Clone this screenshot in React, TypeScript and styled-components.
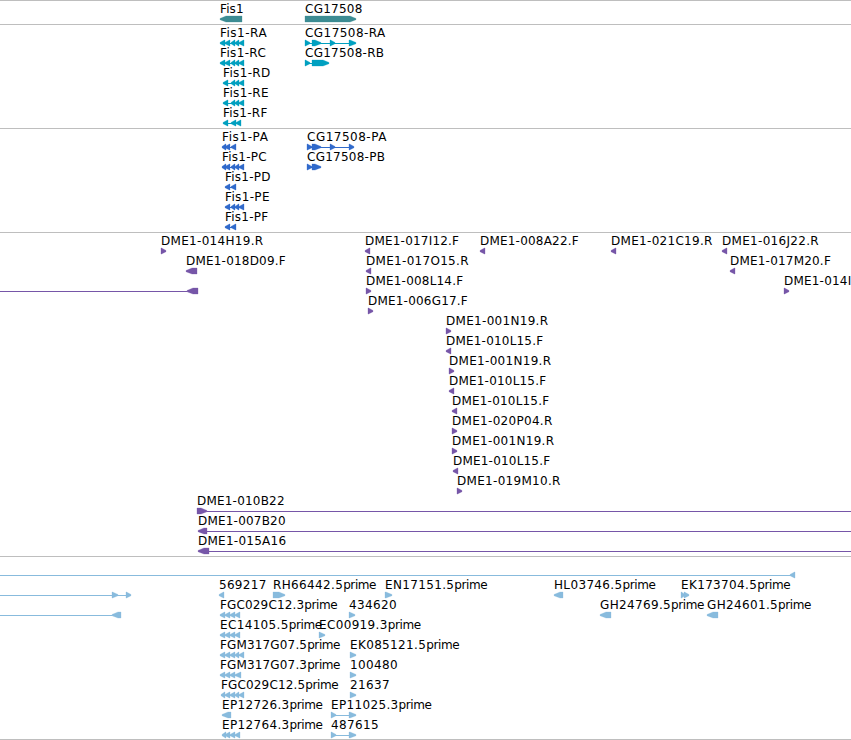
import styled, { createGlobalStyle } from "styled-components";

type Direction = "left" | "right";

type Feature = {
  name?: string;
  at: number;
  dir: Direction;
  blocks: [number, number][];
  line?: [number, number];
  tracking?: number;
};

type TrackData = {
  id: string;
  color: string;
  rows: Feature[][];
};

const GlobalStyle = createGlobalStyle`
  body {
    margin: 0;
    background: #ffffff;
  }
`;

const Browser = styled.main`
  display: flex;
  flex-direction: column;
  width: 851px;
  height: 740px;
  overflow: hidden;
  border-top: 1px solid #bebebe;
  box-sizing: border-box;
`;

const TrackContainer = styled.section`
  display: flex;
  flex-direction: column;
  padding: 2px 0 1px;
  border-bottom: 1px solid #bebebe;

  &:last-child {
    padding-bottom: 0;
  }
`;

const Row = styled.div`
  position: relative;
  height: 20px;
  flex: none;
`;

const FeatureBox = styled.div<{ $x: number }>`
  position: absolute;
  top: 0;
  left: ${({ $x }) => $x}px;
  display: flex;
  flex-direction: column;
`;

const Label = styled.span<{ $tracking: number }>`
  height: 13px;
  font-family: "DejaVu Sans", sans-serif;
  font-size: 12px;
  line-height: 13px;
  letter-spacing: ${({ $tracking }) => $tracking}px;
  white-space: pre;
  color: #000000;
`;

const Suffix = styled.span`
  letter-spacing: -0.4px;
`;

const Glyph = styled.svg`
  display: block;
  height: 6px;
  overflow: visible;
`;

const right = (from: number, ...blocks: [number, number][]) => ({ at: from, dir: "right" as Direction, blocks });
const left = (from: number, ...blocks: [number, number][]) => ({ at: from, dir: "left" as Direction, blocks });

const endTracking = (name: string) => (name.endsWith(".F") ? 0.2 : 0.3);
const tickLeft = (name: string, at: number): Feature => ({
  name,
  ...left(at, [at, at + 5]),
  tracking: endTracking(name),
});
const tickRight = (name: string, at: number): Feature => ({
  name,
  ...right(at, [at, at + 5]),
  tracking: endTracking(name),
});

const TRACKS: TrackData[] = [
  {
    id: "gene",
    color: "#3c8c93",
    rows: [
      [
        { name: "Fis1", ...left(220, [220, 242]), tracking: 0.1 },
        { name: "CG17508", ...right(305, [305, 356]), tracking: 0.25 },
      ],
    ],
  },
  {
    id: "mrna",
    color: "#00a0c0",
    rows: [
      [
        { name: "Fis1-RA", ...left(220, [220, 225], [225, 230], [231, 235], [235, 239], [239, 244]), tracking: 0.5 },
        { name: "CG17508-RA", ...right(305, [305, 310], [312, 321], [330, 335], [349, 356]), tracking: 0.45 },
      ],
      [
        { name: "Fis1-RC", ...left(220, [220, 225], [225, 230], [231, 235], [235, 239], [239, 244]) },
        { name: "CG17508-RB", ...right(305, [305, 310], [312, 329]), tracking: 0.25 },
      ],
      [{ name: "Fis1-RD", ...left(223, [223, 228], [231, 235], [235, 239], [239, 244]) }],
      [{ name: "Fis1-RE", ...left(223, [223, 228], [231, 235], [235, 239], [239, 244]) }],
      [{ name: "Fis1-RF", ...left(223, [223, 228], [231, 236], [236, 241]), tracking: 0.25 }],
    ],
  },
  {
    id: "cds",
    color: "#306acb",
    rows: [
      [
        { name: "Fis1-PA", ...left(222, [222, 226], [225, 230], [231, 236]), tracking: 0.6 },
        { name: "CG17508-PA", ...right(307, [307, 312], [312, 321], [330, 335], [349, 354]), tracking: 0.5 },
      ],
      [
        { name: "Fis1-PC", ...left(222, [222, 226], [225, 230], [231, 235], [235, 239], [239, 244]), tracking: 0.25 },
        { name: "CG17508-PB", ...right(307, [307, 312], [312, 321]), tracking: 0.25 },
      ],
      [{ name: "Fis1-PD", ...left(225, [225, 230], [231, 236]), tracking: 0.25 }],
      [{ name: "Fis1-PE", ...left(225, [225, 230], [231, 235], [235, 239], [239, 244]) }],
      [{ name: "Fis1-PF", ...left(225, [225, 230], [231, 236]), tracking: 0.25 }],
    ],
  },
  {
    id: "bac",
    color: "#7656a8",
    rows: [
      [
        tickRight("DME1-014H19.R", 161),
        tickLeft("DME1-017I12.F", 365),
        tickLeft("DME1-008A22.F", 480),
        tickLeft("DME1-021C19.R", 611),
        tickLeft("DME1-016J22.R", 722),
      ],
      [
        { name: "DME1-018D09.F", ...left(186, [186, 197]), tracking: 0.2 },
        tickLeft("DME1-017O15.R", 366),
        tickLeft("DME1-017M20.F", 730),
      ],
      [
        { ...left(0, [187, 198]), line: [0, 187] },
        tickRight("DME1-008L14.F", 366),
        tickRight("DME1-014I05.F", 784),
      ],
      [tickRight("DME1-006G17.F", 368)],
      [tickRight("DME1-001N19.R", 446)],
      [tickLeft("DME1-010L15.F", 446)],
      [tickRight("DME1-001N19.R", 449)],
      [tickLeft("DME1-010L15.F", 449)],
      [tickLeft("DME1-010L15.F", 452)],
      [tickRight("DME1-020P04.R", 452)],
      [tickRight("DME1-001N19.R", 452)],
      [tickLeft("DME1-010L15.F", 453)],
      [tickRight("DME1-019M10.R", 457)],
      [{ name: "DME1-010B22", ...right(197, [197, 207]), line: [207, 851], tracking: 0.2 }],
      [{ name: "DME1-007B20", ...left(198, [198, 207]), line: [207, 851], tracking: 0.2 }],
      [{ name: "DME1-015A16", ...left(198, [198, 209]), line: [209, 851], tracking: 0.25 }],
    ],
  },
  {
    id: "est",
    color: "#88bbdd",
    rows: [
      [{ ...left(0, [790, 795]), line: [0, 790] }],
      [
        { ...right(0, [112, 118], [126, 131]), line: [0, 126] },
        tickLeft("569217", 219),
        { name: "RH66442.5prime", ...right(273, [273, 285]) },
        { name: "EN17151.5prime", ...right(385, [385, 392]) },
        { name: "HL03746.5prime", ...left(554, [554, 563]) },
        { name: "EK173704.5prime", ...right(681, [681, 685], [684, 689]) },
      ],
      [
        { ...left(0, [112, 121]), line: [0, 112] },
        {
          name: "FGC029C12.3prime",
          ...left(220, [220, 225], [225, 230], [230, 235], [235, 240]),
          tracking: 0.15,
        },
        { name: "434620", ...right(349, [349, 355]) },
        { name: "GH24769.5prime", ...left(600, [600, 611]) },
        { name: "GH24601.5prime", ...left(707, [707, 718]) },
      ],
      [
        { name: "EC14105.5prime", ...left(220, [220, 225], [225, 230], [230, 235], [235, 240]) },
        { name: "EC00919.3prime", ...right(319, [319, 325]) },
      ],
      [
        {
          name: "FGM317G07.5prime",
          ...left(220, [220, 225], [225, 230], [230, 235], [235, 239], [239, 244]),
          tracking: 0.15,
        },
        { name: "EK085121.5prime", ...right(350, [350, 356]) },
      ],
      [
        {
          name: "FGM317G07.3prime",
          ...left(220, [220, 225], [225, 230], [230, 235], [235, 241]),
          tracking: 0.15,
        },
        { name: "100480", ...right(350, [350, 356]) },
      ],
      [
        {
          name: "FGC029C12.5prime",
          ...left(221, [221, 225], [225, 230], [230, 235], [235, 239], [239, 244]),
          tracking: 0.15,
        },
        { name: "21637", ...right(350, [350, 356]) },
      ],
      [
        { name: "EP12726.3prime", ...left(222, [222, 231]) },
        { name: "EP11025.3prime", ...right(331, [331, 336], [349, 356]) },
      ],
      [
        { name: "EP12764.3prime", ...left(222, [222, 226], [225, 230], [230, 235], [235, 240]) },
        { name: "487615", ...right(331, [331, 336], [349, 356]) },
      ],
    ],
  },
];

// wide blocks get a blunt head, short ones are plain triangles
const blockPoints = (start: number, end: number, dir: Direction) => {
  const head = Math.min(6, end - start - 0.5);
  return dir === "left"
    ? `${start},2.5 ${start + head},0 ${end},0 ${end},6 ${start + head},6 ${start},3.7`
    : `${end},2.5 ${end - head},0 ${start},0 ${start},6 ${end - head},6 ${end},3.7`;
};

function FeatureGlyph({ feature, color }: { feature: Feature; color: string }) {
  const { at, blocks, dir } = feature;
  const [from, to] = feature.line ?? [blocks[0][0] + 2, blocks[blocks.length - 1][1] - 2];

  return (
    <Glyph width={1} height={6} fill={color} stroke={color} strokeWidth={0.3}>
      {(feature.line || blocks.length > 1) && (
        <rect x={from - at} y={3} width={to - from} height={1} stroke="none" shapeRendering="crispEdges" />
      )}
      {blocks.map(([start, end]) => (
        <polygon key={start} points={blockPoints(start - at, end - at, dir)} />
      ))}
    </Glyph>
  );
}

function FeatureLabel({ name = "", tracking = 0.35 }: { name?: string; tracking?: number }) {
  const hasSuffix = name.endsWith("prime");

  return (
    <Label $tracking={tracking}>
      {hasSuffix ? name.slice(0, -5) : name}
      {hasSuffix && <Suffix>prime</Suffix>}
    </Label>
  );
}

function Track({ track }: { track: TrackData }) {
  return (
    <TrackContainer>
      {track.rows.map((row, index) => (
        <Row key={index}>
          {row.map((feature) => (
            <FeatureBox key={`${feature.name}-${feature.at}`} $x={feature.at}>
              <FeatureLabel name={feature.name} tracking={feature.tracking} />
              <FeatureGlyph feature={feature} color={track.color} />
            </FeatureBox>
          ))}
        </Row>
      ))}
    </TrackContainer>
  );
}

export default function App() {
  return (
    <>
      <GlobalStyle />
      <Browser>
        {TRACKS.map((track) => (
          <Track key={track.id} track={track} />
        ))}
      </Browser>
    </>
  );
}
